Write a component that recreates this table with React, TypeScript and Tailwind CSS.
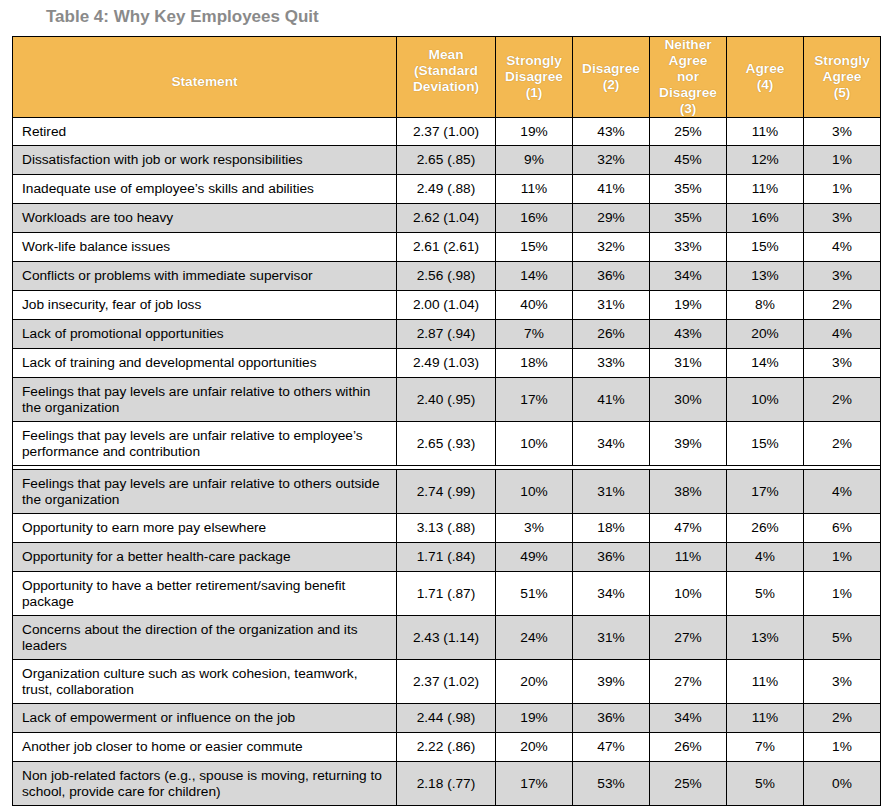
const headers = [
  ["Mean", "(Standard", "Deviation)"],
  ["Strongly", "Disagree", "(1)"],
  ["Disagree", "(2)"],
  ["Neither", "Agree", "nor", "Disagree", "(3)"],
  ["Agree", "(4)"],
  ["Strongly", "Agree", "(5)"],
];

type Row = { s: string[]; m: string; v: string[]; gapBefore?: boolean };

const rows: Row[] = [
  { s: ["Retired"], m: "2.37 (1.00)", v: ["19%", "43%", "25%", "11%", "3%"] },
  { s: ["Dissatisfaction with job or work responsibilities"], m: "2.65 (.85)", v: ["9%", "32%", "45%", "12%", "1%"] },
  { s: ["Inadequate use of employee’s skills and abilities"], m: "2.49 (.88)", v: ["11%", "41%", "35%", "11%", "1%"] },
  { s: ["Workloads are too heavy"], m: "2.62 (1.04)", v: ["16%", "29%", "35%", "16%", "3%"] },
  { s: ["Work-life balance issues"], m: "2.61 (2.61)", v: ["15%", "32%", "33%", "15%", "4%"] },
  { s: ["Conflicts or problems with immediate supervisor"], m: "2.56 (.98)", v: ["14%", "36%", "34%", "13%", "3%"] },
  { s: ["Job insecurity, fear of job loss"], m: "2.00 (1.04)", v: ["40%", "31%", "19%", "8%", "2%"] },
  { s: ["Lack of promotional opportunities"], m: "2.87 (.94)", v: ["7%", "26%", "43%", "20%", "4%"] },
  { s: ["Lack of training and developmental opportunities"], m: "2.49 (1.03)", v: ["18%", "33%", "31%", "14%", "3%"] },
  { s: ["Feelings that pay levels are unfair relative to others within", "the organization"], m: "2.40 (.95)", v: ["17%", "41%", "30%", "10%", "2%"] },
  { s: ["Feelings that pay levels are unfair relative to employee’s", "performance and contribution"], m: "2.65 (.93)", v: ["10%", "34%", "39%", "15%", "2%"] },
  { s: ["Feelings that pay levels are unfair relative to others outside", "the organization"], m: "2.74 (.99)", v: ["10%", "31%", "38%", "17%", "4%"], gapBefore: true },
  { s: ["Opportunity to earn more pay elsewhere"], m: "3.13 (.88)", v: ["3%", "18%", "47%", "26%", "6%"] },
  { s: ["Opportunity for a better health-care package"], m: "1.71 (.84)", v: ["49%", "36%", "11%", "4%", "1%"] },
  { s: ["Opportunity to have a better retirement/saving benefit", "package"], m: "1.71 (.87)", v: ["51%", "34%", "10%", "5%", "1%"] },
  { s: ["Concerns about the direction of the organization and its", "leaders"], m: "2.43 (1.14)", v: ["24%", "31%", "27%", "13%", "5%"] },
  { s: ["Organization culture such as work cohesion, teamwork,", "trust, collaboration"], m: "2.37 (1.02)", v: ["20%", "39%", "27%", "11%", "3%"] },
  { s: ["Lack of empowerment or influence on the job"], m: "2.44 (.98)", v: ["19%", "36%", "34%", "11%", "2%"] },
  { s: ["Another job closer to home or easier commute"], m: "2.22 (.86)", v: ["20%", "47%", "26%", "7%", "1%"] },
  { s: ["Non job-related factors (e.g., spouse is moving, returning to", "school, provide care for children)"], m: "2.18 (.77)", v: ["17%", "53%", "25%", "5%", "0%"] },
];

export default function App() {
  return (
    <div className="w-[887px] h-[811px] overflow-hidden bg-white font-['Liberation_Sans',Arial,sans-serif]">
      <h4 className="pl-[46px] pt-[7px] h-[36px] text-[17px] font-bold text-[#8a8a8a] leading-[20px]">
        Table 4: Why Key Employees Quit
      </h4>
      <table className="ml-[12px] border-collapse table-fixed w-[868px] text-[13.7px] leading-[16px] text-black">
        <colgroup>
          <col className="w-[384px]" />
          <col className="w-[99px]" />
          <col className="w-[77px]" />
          <col className="w-[77px]" />
          <col className="w-[77px]" />
          <col className="w-[77px]" />
          <col className="w-[77px]" />
        </colgroup>
        <thead>
          <tr className="bg-[#f3b952] text-white font-bold [text-shadow:0_0_1px_#a87218]">
            <th className="h-[81px] border border-black p-0 pt-[9px] text-center align-middle">Statement</th>
            {headers.map((h, k) => (
              <th
                key={k}
                className={`h-[81px] border border-black p-0 text-center align-middle overflow-hidden ${k === 0 ? "pb-[12px]" : ""}`}
              >
                <div className="max-h-[80px]">
                  {h.map((l, n) => (
                    <div key={n} className="whitespace-nowrap">
                      {l}
                    </div>
                  ))}
                </div>
              </th>
            ))}
          </tr>
        </thead>
        <tbody>
          {rows.map((r, i) => {
            const bg = i % 2 === 1 ? "bg-[#d7d7d7]" : "bg-white";
            const h = r.s.length > 1 ? "h-[44px]" : i === 0 ? "h-[28px]" : "h-[29px]";
            return [
              r.gapBefore ? (
                <tr key={"gap" + i}>
                  <td colSpan={7} className="h-[4px] p-0 border-x border-black"></td>
                </tr>
              ) : null,
              <tr key={i} className={bg}>
                <td className={`${h} border border-black pl-[9px] pr-0 text-left align-middle`}>
                  {r.s.map((l, n) => (
                    <div key={n} className="whitespace-nowrap">
                      {l}
                    </div>
                  ))}
                </td>
                <td className={`${h} border border-black p-0 text-center align-middle`}>{r.m}</td>
                {r.v.map((x, j) => (
                  <td key={j} className={`${h} border border-black p-0 text-center align-middle`}>
                    {x}
                  </td>
                ))}
              </tr>,
            ];
          })}
        </tbody>
      </table>
    </div>
  );
}
